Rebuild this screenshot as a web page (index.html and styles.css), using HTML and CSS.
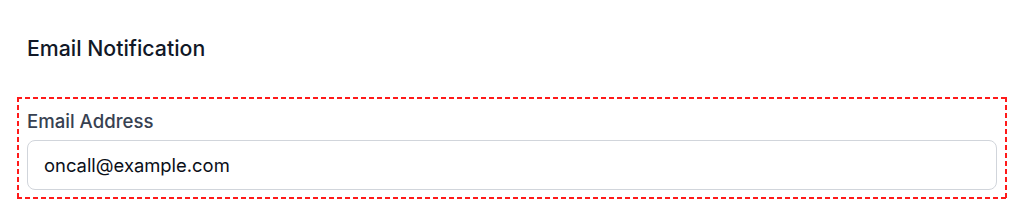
FILE: index.html
```html
<!DOCTYPE html>
<html lang="en">
<head>
  <meta charset="UTF-8">
  <title>Email Notification</title>
  <link rel="stylesheet" href="styles.css">
</head>
<body>

<div class="section">
  <h2 class="section-title">Email Notification</h2>

  <!-- highlighted field -->
  <div class="field-box">
    <label class="field-label" for="email">Email Address</label>
    <input class="field-input" id="email" type="email" value="oncall@example.com">
  </div>
</div>

</body>
</html>
```

FILE: styles.css
```css
body {
  margin: 0;
  background: #ffffff;
  font-family: Inter, "Noto Sans", sans-serif;
  color: #111827;
}

.section {
  padding: 0 17px 0 17px;
}

.section-title {
  margin: 0;
  padding: 35px 0 0 10px;
  font-size: 21.3px;
  font-weight: 500;
  line-height: 26px;
  color: #111827;
}

/* Dashed outline around the field (5px dash, 3px gap) */
.field-box {
  margin-top: 36px;
  padding: 13px 10px 9px 10px;
  background:
    repeating-linear-gradient(90deg, #ff1a1a 0 5px, transparent 5px 8px) top left / 100% 2px no-repeat,
    repeating-linear-gradient(90deg, #ff1a1a 0 5px, transparent 5px 8px) bottom left / 100% 2px no-repeat,
    repeating-linear-gradient(180deg, #ff1a1a 0 5px, transparent 5px 8px) top left / 2px 100% no-repeat,
    repeating-linear-gradient(180deg, #ff1a1a 0 5px, transparent 5px 8px) top right / 2px 100% no-repeat;
}

.field-label {
  display: block;
  font-size: 18.6px;
  font-weight: 500;
  line-height: 22px;
  color: #374151;
}

.field-input {
  display: block;
  box-sizing: border-box;
  width: 100%;
  height: 50px;
  margin-top: 8px;
  padding: 0 16px;
  border: 1px solid #d1d5db;
  border-radius: 8px;
  font-family: Inter, "Noto Sans", sans-serif;
  font-size: 18.4px;
  color: #0b0f19;
  background: #ffffff;
  outline: none;
}
```
